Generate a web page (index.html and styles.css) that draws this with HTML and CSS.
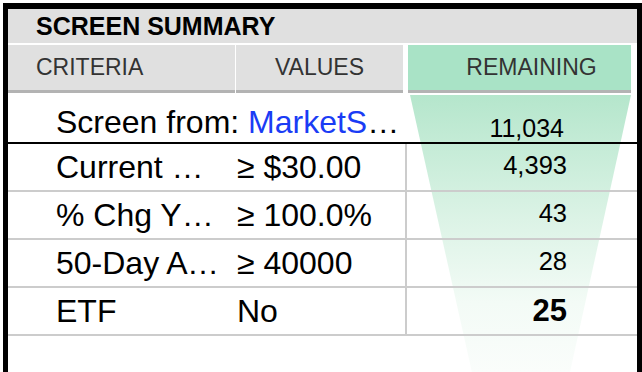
FILE: index.html
```html
<!DOCTYPE html>
<html>
<head>
<meta charset="utf-8">
<link rel="stylesheet" href="styles.css">
</head>
<body>
<div class="frame">
  <div class="title">SCREEN SUMMARY</div>
  <div class="colheads">
    <div class="ch ch-crit">CRITERIA</div>
    <div class="ch ch-val">VALUES</div>
    <div class="ch ch-rem">REMAINING</div>
  </div>
  <div class="rows">
    <div class="funnel"></div>
    <div class="row row-src">
      <div class="src">Screen from: <span class="link">MarketSmith Growth 250</span></div>
      <div class="num">11,034</div>
    </div>
    <div class="row">
      <div class="crit">Current Price</div>
      <div class="val">≥ $30.00</div>
      <div class="num">4,393</div>
    </div>
    <div class="row">
      <div class="crit">% Chg YTD</div>
      <div class="val">≥ 100.0%</div>
      <div class="num">43</div>
    </div>
    <div class="row">
      <div class="crit">50-Day Avg Vol</div>
      <div class="val">≥ 40000</div>
      <div class="num">28</div>
    </div>
    <div class="row">
      <div class="crit">ETF</div>
      <div class="val">No</div>
      <div class="num num-final">25</div>
    </div>
  </div>
</div>
</body>
</html>
```

FILE: styles.css
```css
html, body {
  margin: 0;
  padding: 0;
  background: #fff;
  overflow: hidden;
}
body {
  font-family: "Liberation Sans", Arial, Helvetica, sans-serif;
  color: #000;
}
.frame {
  margin: 3px 0 0 3px;
  width: 629px;
  height: 420px;
  border-top: 6px solid #000;
  border-left: 5px solid #000;
  border-right: 5px solid #000;
  display: flex;
  flex-direction: column;
}
.title {
  height: 34px;
  background: #e0e0e0;
  font-weight: bold;
  font-size: 25px;
  line-height: 34px;
  padding-left: 28px;
  margin-bottom: 2px;
}
.colheads {
  display: flex;
  height: 48px;
  color: #333;
  font-size: 23px;
}
.ch {
  background: #e0e0e0;
  border-bottom: 3px solid #b3b3b3;
  display: flex;
  align-items: center;
  box-sizing: border-box;
}
.ch-crit {
  width: 227px;
  padding-left: 28px;
  margin-right: 1px;
}
.ch-val {
  width: 167px;
  justify-content: center;
  margin-right: 5px;
}
.ch-rem {
  width: 223px;
  background: #a9e3c6;
  justify-content: center;
  padding-left: 24px;
}
.rows {
  position: relative;
  flex: 1;
}
.funnel {
  position: absolute;
  left: 402px;
  top: 2px;
  width: 221px;
  height: 277px;
  background: linear-gradient(#b5e6cc 0%, #dcf3e6 45%, #f3fbf6 75%, #fafdfb 100%);
  clip-path: polygon(0 0, 100% 0, 72.4% 100%, 28% 100%);
  z-index: 0;
}
.row {
  position: relative;
  z-index: 1;
  display: flex;
  height: 46px;
  border-bottom: 2px solid #cccccc;
  font-size: 32px;
  line-height: 46px;
}
.row-src {
  height: 39px;
  padding-top: 10px;
  line-height: 39px;
  border-bottom-color: #000;
}
.src {
  width: 349px;
  padding-left: 48px;
  white-space: nowrap;
  overflow: hidden;
  text-overflow: ellipsis;
}
.link {
  color: #1a3cf5;
}
.crit {
  width: 167px;
  padding-left: 48px;
  padding-right: 14px;
  white-space: nowrap;
  overflow: hidden;
  text-overflow: ellipsis;
}
.val {
  width: 168px;
  white-space: nowrap;
}
.num {
  flex: 1;
  border-left: 2px solid #ccc;
  text-align: right;
  padding-right: 70px;
  font-size: 25.5px;
  line-height: 42px;
}
.row-src .num {
  border-left: none;
  padding-right: 73px;
  font-size: 25px;
  line-height: 25px;
  align-self: flex-end;
  padding-bottom: 1px;
}
.num-final {
  font-weight: bold;
  font-size: 31px;
  line-height: 46px;
}
```
